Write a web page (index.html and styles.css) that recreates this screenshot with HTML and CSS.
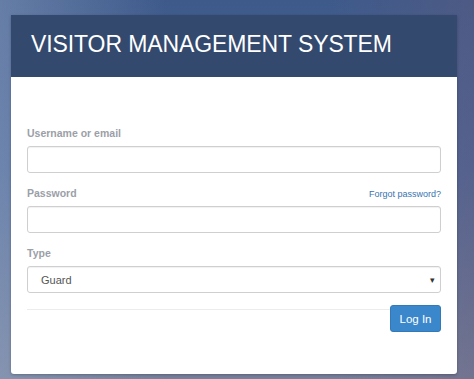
FILE: index.html
```html
<!DOCTYPE html>
<html>
<head>
<meta charset="utf-8">
<link rel="stylesheet" href="styles.css">
</head>
<body>
<div class="page">
  <div class="card">
    <div class="card-header">
      <h1 class="title">VISITOR MANAGEMENT SYSTEM</h1>
    </div>
    <form class="card-body">
      <div class="group">
        <label class="label">Username or email</label>
        <input class="control" type="text">
      </div>
      <div class="group">
        <div class="label-row">
          <label class="label">Password</label>
          <a class="forgot" href="#">Forgot password?</a>
        </div>
        <input class="control" type="password">
      </div>
      <div class="group">
        <label class="label">Type</label>
        <div class="select">
          <span class="select-value">Guard</span>
          <span class="caret">&#9662;</span>
        </div>
      </div>
      <div class="footer">
        <div class="rule"></div>
        <button class="btn" type="button">Log In</button>
      </div>
    </form>
  </div>
</div>
</body>
</html>
```

FILE: styles.css
```css
html, body {
  margin: 0;
  padding: 0;
  height: 100%;
}
body {
  font-family: "Liberation Sans", Arial, sans-serif;
  background:
    linear-gradient(to right, rgba(150,170,200,0.45) 0%, rgba(150,170,200,0) 35%, rgba(110,90,130,0) 70%, rgba(105,90,120,0.35) 100%),
    linear-gradient(to bottom, #3e5a8b 0%, #4c6698 45%, #77819c 100%);
  overflow: hidden;
}
.page {
  padding: 15px 17px 0 11px;
}
.card {
  background: #fff;
  border-radius: 0 0 3px 3px;
  box-shadow: 0 1px 3px rgba(0,0,0,0.25);
}
.card-header {
  background: #34496e;
  height: 62px;
  display: flex;
  align-items: center;
  padding: 0 20px 3px 20px;
  box-sizing: border-box;
}
.title {
  margin: 0;
  color: #fff;
  font-weight: normal;
  font-size: 23px;
  letter-spacing: -0.1px;
}
.card-body {
  padding: 49px 16px 42px 16px;
  margin: 0;
}
.group {
  margin-bottom: 13px;
}
.label-row {
  display: flex;
  justify-content: space-between;
  align-items: baseline;
}
.label {
  display: block;
  font-size: 10.5px;
  font-weight: bold;
  color: #9ba0a8;
  line-height: 14px;
  margin-bottom: 6px;
}
.forgot {
  font-size: 9px;
  color: #3874b0;
  text-decoration: none;
}
.control {
  display: block;
  box-sizing: border-box;
  width: 100%;
  height: 27px;
  margin: 0;
  border: 1px solid #cfcfcf;
  border-radius: 3px;
  background: #fff;
  box-shadow: inset 0 1px 1px rgba(0,0,0,0.06);
  outline: none;
}
.select {
  box-sizing: border-box;
  height: 27px;
  border: 1px solid #cfcfcf;
  border-radius: 3px;
  box-shadow: inset 0 1px 1px rgba(0,0,0,0.06);
  display: flex;
  align-items: center;
  justify-content: space-between;
  padding: 0 5px 0 13px;
}
.select-value {
  font-size: 11px;
  color: #555;
}
.caret {
  font-size: 9px;
  color: #333;
}
.footer {
  display: flex;
  align-items: flex-start;
  margin-top: -1px;
}
.rule {
  flex: 1;
  border-top: 1px solid #ececec;
  margin-top: 4px;
}
.btn {
  width: 51px;
  height: 27px;
  box-sizing: border-box;
  background: #3b87cb;
  border: 1px solid #3279b8;
  border-radius: 3px;
  color: #fff;
  font-family: "Liberation Sans", Arial, sans-serif;
  font-size: 11.5px;
  padding: 0;
}
```
